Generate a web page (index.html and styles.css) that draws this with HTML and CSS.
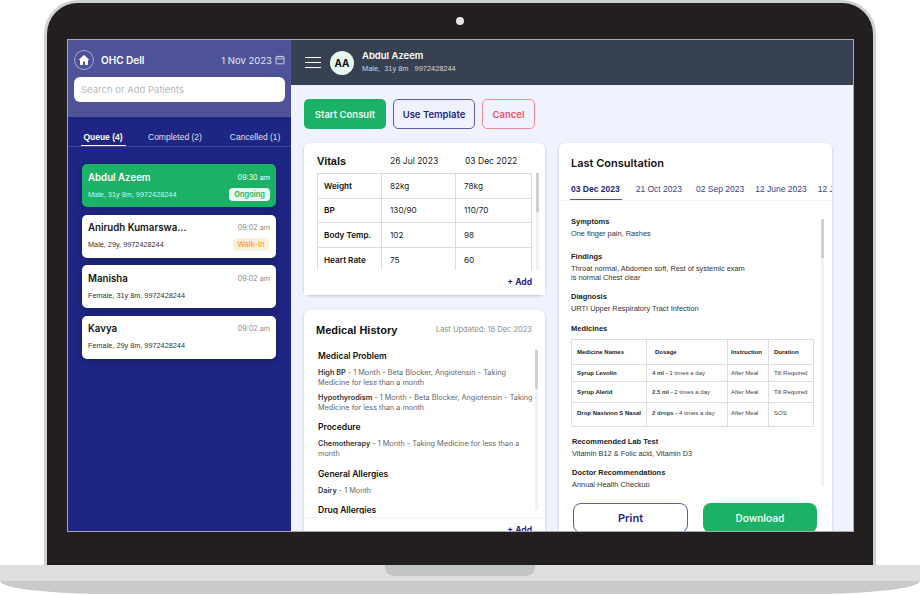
FILE: index.html
```html
<!DOCTYPE html>
<html lang="en">
<head>
    <meta charset="UTF-8">
    <title>OHC Dell - Queue</title>
    <link rel="stylesheet" href="styles.css">
</head>
<body>
<div class="laptop">
    <div class="lid">
        <div class="camera"></div>
        <div class="screen">
            <aside class="sidebar">
                <div class="side-head">
                    <div class="side-top">
                        <span class="home-icon">
                            <svg width="12" height="12" viewBox="0 0 24 24"><path fill="#fff" d="M12 2 1 12h3v10h6v-7h4v7h6V12h3z"/></svg>
                        </span>
                        <span class="clinic">OHC Dell</span>
                        <span class="today">1 Nov 2023</span>
                        <svg class="cal-icon" width="10" height="10" viewBox="0 0 10 10" fill="none" stroke="#fff" stroke-width="0.7"><rect x="0.9" y="1.6" width="8.2" height="7.2" rx="0.8"/><path d="M0.9 3.8h8.2M3 0.6v1.6M7 0.6v1.6"/></svg>
                    </div>
                    <div class="search">Search or Add Patients</div>
                </div>
                <div class="tabs">
                    <span class="tab tab-active">Queue (4)</span>
                    <span class="tab tab-completed">Completed (2)</span>
                    <span class="tab tab-cancelled">Cancelled (1)</span>
                </div>
                <div class="queue">
                    <div class="patient patient-active">
                        <div class="patient-row">
                            <span class="patient-name">Abdul Azeem</span>
                            <span class="patient-time">09:30 am</span>
                        </div>
                        <div class="patient-row">
                            <span class="patient-meta">Male, 31y 8m, 9972428244</span>
                            <span class="badge badge-ongoing">Ongoing</span>
                        </div>
                    </div>
                    <div class="patient">
                        <div class="patient-row">
                            <span class="patient-name">Anirudh Kumarswa...</span>
                            <span class="patient-time">09:02 am</span>
                        </div>
                        <div class="patient-row">
                            <span class="patient-meta">Male, 29y, 9972428244</span>
                            <span class="badge badge-walkin">Walk-In</span>
                        </div>
                    </div>
                    <div class="patient">
                        <div class="patient-row">
                            <span class="patient-name">Manisha</span>
                            <span class="patient-time">09:02 am</span>
                        </div>
                        <div class="patient-row">
                            <span class="patient-meta">Female, 31y 8m, 9972428244</span>
                        </div>
                    </div>
                    <div class="patient">
                        <div class="patient-row">
                            <span class="patient-name">Kavya</span>
                            <span class="patient-time">09:02 am</span>
                        </div>
                        <div class="patient-row">
                            <span class="patient-meta">Female, 29y 8m, 9972428244</span>
                        </div>
                    </div>
                </div>
            </aside>

            <div class="content">
                <header class="topbar">
                    <div class="burger"><span></span><span></span><span></span></div>
                    <div class="avatar">AA</div>
                    <div class="top-text">
                        <div class="top-name">Abdul Azeem</div>
                        <div class="top-meta">Male,&nbsp; 31y 8m &nbsp; 9972428244</div>
                    </div>
                </header>
                <main class="main">
                    <div class="actions">
                        <button class="btn btn-start">Start Consult</button>
                        <button class="btn btn-template">Use Template</button>
                        <button class="btn btn-cancel">Cancel</button>
                    </div>
                    <div class="columns">
                        <div class="left-col">
                            <section class="card vitals">
                                <div class="vitals-head">
                                    <h2 class="card-title">Vitals</h2>
                                    <span class="vitals-date vitals-date-a">26 Jul 2023</span>
                                    <span class="vitals-date">03 Dec 2022</span>
                                </div>
                                <div class="vitals-body">
                                    <table class="vitals-table">
                                        <tr><th>Weight</th><td>82kg</td><td>78kg</td></tr>
                                        <tr><th>BP</th><td>130/90</td><td>110/70</td></tr>
                                        <tr><th>Body Temp.</th><td>102</td><td>98</td></tr>
                                        <tr><th>Heart Rate</th><td>75</td><td>60</td></tr>
                                    </table>
                                    <div class="scrollbar"><div class="thumb"></div></div>
                                </div>
                                <div class="card-foot">+ Add</div>
                            </section>

                            <section class="card history">
                                <div class="history-head">
                                    <h2 class="card-title history-title">Medical History</h2>
                                    <span class="updated">Last Updated: 18 Dec 2023</span>
                                </div>
                                <div class="history-body">
                                    <div class="history-list">
                                        <h3>Medical Problem</h3>
                                        <p><b>High BP</b> - 1 Month - Beta Blocker, Angiotensin - Taking Medicine for less than a month</p>
                                        <p><b>Hypothyrodism</b> - 1 Month - Beta Blocker, Angiotensin - Taking Medicine for less than a month</p>
                                        <h3>Procedure</h3>
                                        <p><b>Chemotherapy</b> - 1 Month - Taking Medicine for less than a month</p>
                                        <h3>General Allergies</h3>
                                        <p><b>Dairy</b> - 1 Month</p>
                                        <h3>Drug Allergies</h3>
                                    </div>
                                    <div class="scrollbar"><div class="thumb"></div></div>
                                </div>
                                <div class="card-foot history-foot">+ Add</div>
                            </section>
                        </div>

                        <section class="card consult">
                            <h2 class="card-title consult-title">Last Consultation</h2>
                            <div class="date-tabs">
                                <span class="date-tab date-tab-active">03 Dec 2023</span>
                                <span class="date-tab">21 Oct 2023</span>
                                <span class="date-tab">02 Sep 2023</span>
                                <span class="date-tab date-tab-tight">12 June 2023</span>
                                <span class="date-tab">12 June 2023</span>
                            </div>
                            <div class="consult-body">
                                <div class="consult-notes">
                                    <div class="note note-wide">
                                        <h4>Symptoms</h4>
                                        <p>One finger pain, Rashes</p>
                                    </div>
                                    <div class="note note-findings">
                                        <h4>Findings</h4>
                                        <p>Throat normal, Abdomen soft, Rest of systemic exam<br>is normal Chest clear</p>
                                    </div>
                                    <div class="note note-diagnosis">
                                        <h4>Diagnosis</h4>
                                        <p>URTI Upper Respiratory Tract Infection</p>
                                    </div>
                                    <div class="note note-med">
                                        <h4>Medicines</h4>
                                    </div>
                                    <table class="med-table">
                                        <tr class="med-head"><th>Medicine Names</th><th class="med-dose-head">Dosage</th><th>Instruction</th><th>Duration</th></tr>
                                        <tr class="med-a"><th>Syrup Levolin</th><td><b>4 ml -</b> 3 times a day</td><td>After Meal</td><td>Till Required</td></tr>
                                        <tr class="med-b"><th>Syrup Alerid</th><td><b>2.5 ml -</b> 2 times a day</td><td>After Meal</td><td>Till Required</td></tr>
                                        <tr class="med-c"><th>Drop Nasivion S Nasal</th><td><b>2 drops -</b> 4 times a day</td><td>After Meal</td><td>SOS</td></tr>
                                    </table>
                                    <div class="note note-lab">
                                        <h4>Recommended Lab Test</h4>
                                        <p>Vitamin B12 &amp; Folic acid, Vitamin D3</p>
                                    </div>
                                    <div class="note note-doctor">
                                        <h4>Doctor Recommendations</h4>
                                        <p>Annual Health Checkup</p>
                                    </div>
                                </div>
                                <div class="scrollbar"><div class="thumb"></div></div>
                            </div>
                            <div class="consult-actions">
                                <button class="wide-btn wide-print">Print</button>
                                <button class="wide-btn wide-download">Download</button>
                            </div>
                        </section>
                    </div>
                </main>
            </div>
        </div>
    </div>
    <div class="base">
        <div class="base-top"><div class="notch"></div></div>
        <div class="base-bottom"></div>
    </div>
</div>
</body>
</html>
```

FILE: styles.css
```css
* {
    box-sizing: border-box;
}

body {
    margin: 0;
    background: #fff;
    font-family: Inter, "Liberation Sans", sans-serif;
    overflow: hidden;
}

h2, h3, h4, p {
    margin: 0;
}

.laptop {
    width: 920px;
    height: 595px;
}

.lid {
    width: 832px;
    height: 565px;
    margin-left: 44px;
    padding: 14px 19px 0 20px;
    background: #231f20;
    border: 3px solid #cfd0d0;
    border-bottom: none;
    border-radius: 34px 34px 0 0;
}

.camera {
    width: 8px;
    height: 8px;
    margin: 0 0 14px 389px;
    background: #e6e6e6;
    border-radius: 50%;
}

.screen {
    display: flex;
    height: 493px;
    border: 1px solid #a9aab0;
    overflow: hidden;
}

/* sidebar */
.sidebar {
    width: 223px;
    flex-shrink: 0;
    background: #1e2583;
}

.side-head {
    height: 77px;
    padding: 10px 6px 0 6px;
    background: #4d5299;
}

.side-top {
    display: flex;
    align-items: center;
    height: 20px;
    margin-bottom: 7px;
    color: #fff;
}

.home-icon {
    display: flex;
    align-items: center;
    justify-content: center;
    width: 20px;
    height: 20px;
    border: 1px solid #a7aad0;
    border-radius: 50%;
}

.clinic {
    margin-left: 7px;
    font-size: 10px;
    font-weight: 600;
}

.today {
    margin-left: auto;
    font-size: 9.5px;
    color: #e6e7f3;
}

.cal-icon {
    margin-left: 3px;
}

.search {
    height: 25px;
    padding: 0 7px;
    line-height: 25px;
    font-size: 9.5px;
    color: #b9b9b9;
    background: #fff;
    border-radius: 6px;
}

.tabs {
    display: flex;
    height: 30px;
    padding-top: 15px;
    border-bottom: 1px solid #3f4596;
    font-family: "Liberation Sans", sans-serif;
    font-size: 8.5px;
    color: #dfe0f0;
}

.tab {
    display: block;
    height: 14px;
}

.tab-active {
    width: 45px;
    margin-left: 13px;
    padding-right: 1px;
    font-weight: bold;
    color: #fff;
    text-align: center;
    border-bottom: 1px solid #fff;
}

.tab-completed {
    margin-left: 22px;
}

.tab-cancelled {
    margin-left: 28px;
}

.queue {
    display: flex;
    flex-direction: column;
    gap: 7.5px;
    padding: 17px 15px 0 14px;
}

.patient {
    display: flex;
    flex-direction: column;
    justify-content: space-between;
    height: 43px;
    padding: 6px;
    background: #fff;
    border-radius: 5px;
    box-shadow: 0 2px 6px rgba(0, 0, 0, 0.2);
}

.patient-active {
    background: #1bb167;
}

.patient-row {
    display: flex;
    align-items: center;
    justify-content: space-between;
    height: 14px;
}

.patient-name {
    font-size: 9.7px;
    font-weight: 600;
    color: #151515;
}

.patient-time {
    font-size: 7.2px;
    color: #8a8a8a;
}

.patient-meta {
    font-family: "Liberation Sans", sans-serif;
    font-size: 7.3px;
    color: #333;
}

.patient-active .patient-name,
.patient-active .patient-time {
    color: #fff;
}

.patient-active .patient-meta {
    color: #d6f3e4;
}

.badge {
    padding: 2px 5px;
    font-size: 7.5px;
    font-weight: 500;
    border-radius: 4px;
}

.badge-ongoing {
    color: #1bb167;
    background: #e8fbf1;
    font-weight: 600;
}

.badge-walkin {
    margin-right: 1px;
    padding: 2px 4.5px;
    color: #f5a02c;
    background: #fdf0dd;
}

/* right side */
.content {
    display: flex;
    flex-direction: column;
    flex: 1;
    min-width: 0;
}

.topbar {
    display: flex;
    align-items: center;
    flex-shrink: 0;
    height: 45px;
    padding-left: 14px;
    background: #374151;
    color: #fff;
}

.burger {
    display: flex;
    flex-direction: column;
    gap: 4px;
    width: 16px;
    margin-right: 9px;
}

.burger span {
    height: 1px;
    background: #fff;
}

.avatar {
    width: 24px;
    height: 24px;
    margin-right: 8px;
    line-height: 24px;
    text-align: center;
    font-size: 10px;
    font-weight: 700;
    color: #151515;
    background: #e8fbf1;
    border-radius: 50%;
}

.top-text {
    padding-bottom: 3px;
}

.top-name {
    font-size: 9.5px;
    font-weight: 600;
}

.top-meta {
    margin-top: 3px;
    font-family: "Liberation Sans", sans-serif;
    font-size: 7.4px;
    color: #d4d7dc;
}

.main {
    flex: 1;
    min-height: 0;
    padding: 14px 22px 0 13px;
    background: #f0f3ff;
    overflow: hidden;
}

.actions {
    display: flex;
    gap: 7px;
    margin-bottom: 14px;
}

.btn {
    height: 30px;
    padding: 0;
    font-family: Inter, sans-serif;
    font-size: 9.5px;
    font-weight: 600;
    border-radius: 5px;
    background: transparent;
    border: 1px solid transparent;
}

.btn-start {
    width: 82px;
    color: #e8fbf1;
    background: #1bb167;
}

.btn-template {
    width: 82px;
    color: #1e2583;
    border-color: #5a5fa8;
}

.btn-cancel {
    width: 53px;
    color: #f0525f;
    border-color: #f58c93;
}

.columns {
    display: flex;
    align-items: flex-start;
    gap: 14px;
}

.left-col {
    display: flex;
    flex-direction: column;
    gap: 15px;
    width: 241px;
    flex-shrink: 0;
}

.card {
    background: #fff;
    border-radius: 6px;
    box-shadow: 0 1px 3px rgba(0, 0, 0, 0.2);
}

.card-title {
    font-family: "Liberation Sans", sans-serif;
    font-size: 11px;
    font-weight: bold;
    color: #111;
}

.card-foot {
    height: 25px;
    padding-right: 13px;
    line-height: 25px;
    text-align: right;
    font-size: 8.5px;
    font-weight: 700;
    color: #1e2583;
    background: #fff;
}

.history-foot {
    border-top: 1px solid #f3f3f3;
}

.scrollbar {
    width: 3px;
    flex-shrink: 0;
    background: #f2f2f2;
}

.thumb {
    height: 39px;
    background: #cfcfcf;
}

/* vitals */
.vitals {
    height: 152px;
}

.vitals-head {
    display: flex;
    align-items: center;
    height: 30px;
    padding: 6px 0 1px 13px;
}

.vitals-head .card-title {
    width: 73px;
}

.vitals-date {
    font-size: 8.5px;
    color: #222;
}

.vitals-date-a {
    width: 75px;
}

.vitals-body {
    display: flex;
    gap: 4px;
    height: 97px;
    padding-left: 13px;
    overflow: hidden;
}

.vitals-table {
    width: 215px;
    height: 98px;
    flex-shrink: 0;
    border-collapse: collapse;
    table-layout: fixed;
    font-size: 8.2px;
    color: #222;
}

.vitals-table th,
.vitals-table td {
    height: 24.6px;
    padding: 0 6px;
    text-align: left;
    border: 1px solid #dcdcdc;
}

.vitals-table th {
    width: 64px;
    font-weight: 600;
    color: #111;
}

.vitals-table td:nth-child(2) {
    width: 74px;
}

.vitals-table td {
    padding-left: 8px;
}

/* history */
.history {
    height: 240px;
}

.history-head {
    display: flex;
    align-items: center;
    justify-content: space-between;
    height: 40px;
    padding: 0 13px 1px 12px;
}

.history-body {
    display: flex;
    height: 167px;
    padding-left: 14px;
    overflow: hidden;
}

.updated {
    font-size: 7.5px;
    color: #8a8a8a;
}

.history-list {
    width: 217px;
    height: 164px;
    flex-shrink: 0;
    overflow: hidden;
}

.history-list h3 {
    margin: 0 0 6px;
    font-size: 8.5px;
    line-height: 12px;
    font-weight: 600;
    color: #111;
}

.history-list p {
    margin-bottom: 4.5px;
    font-size: 7.3px;
    line-height: 10px;
    color: #666;
}

.history-list p + h3 {
    margin-top: 8.5px;
}

.history-list b {
    font-weight: 600;
    color: #333;
}

.history-body .scrollbar {
    height: 160px;
}

/* consultation */
.consult {
    width: 273px;
    height: 400px;
    flex-shrink: 0;
    overflow: hidden;
}

.consult-title {
    padding: 13px 0 0 12px;
    font-family: Inter, sans-serif;
    font-size: 11px;
    font-weight: 600;
    line-height: 14px;
}

.date-tabs {
    display: flex;
    gap: 14px;
    height: 31px;
    padding: 14px 0 0 12px;
    margin-bottom: 16px;
    border-bottom: 1px solid #f1f1f1;
    font-family: "Liberation Sans", sans-serif;
    font-size: 8.5px;
    white-space: nowrap;
    color: #3a4096;
}

.date-tab-active {
    height: 16px;
    margin-left: -1px;
    padding: 0 2px 0 1px;
    font-weight: bold;
    color: #1e2583;
    border-bottom: 1px solid #4d5299;
}

.date-tab:nth-child(3),
.date-tab-tight {
    margin-right: -3px;
}

.consult-body {
    display: flex;
    height: 270px;
    padding-left: 12px;
    overflow: hidden;
}

.consult-notes {
    width: 250px;
    flex-shrink: 0;
    font-family: "Liberation Sans", sans-serif;
}

.note {
    margin-bottom: 9px;
}

.note-wide {
    margin-bottom: 13px;
}

.note-findings {
    margin-bottom: 9.5px;
}

.note-diagnosis {
    margin-bottom: 10px;
}

.note-med {
    margin-bottom: 0;
}

.note h4 {
    font-size: 7.5px;
    line-height: 10px;
    font-weight: bold;
    color: #222;
}

.note p {
    margin-top: 2px;
    font-size: 7.4px;
    line-height: 9.5px;
    color: #333;
}

.med-table {
    width: 243px;
    margin-top: 5px;
    border-collapse: collapse;
    table-layout: fixed;
    font-size: 6px;
    color: #444;
}

.med-table th,
.med-table td {
    padding: 0 0 0 5px;
    text-align: left;
    white-space: nowrap;
    border: 1px solid #dedede;
}

.med-table th {
    color: #222;
}

.med-table tr > :nth-child(1) {
    width: 75px;
}

.med-table tr > :nth-child(2) {
    width: 81px;
}

.med-table tr > :nth-child(3) {
    width: 41px;
    padding-left: 3px;
}

.med-head > * {
    height: 25px;
}

.med-table .med-dose-head {
    padding-left: 8px;
}

.med-a > * {
    height: 17px;
}

.med-b > * {
    height: 21px;
}

.med-table .med-c > * {
    height: 24px;
    padding-bottom: 3px;
}

.note-lab {
    margin: 10px 0 10px 1px;
}

.note-doctor {
    margin-left: 1px;
}

.consult-body .scrollbar {
    margin-top: 2px;
}

.consult-actions {
    display: flex;
    gap: 15px;
    padding: 16px 0 0 14px;
}

.wide-btn {
    width: 115px;
    height: 30px;
    font-size: 11px;
    border-radius: 8px;
    border: 1px solid transparent;
}

.wide-print {
    font-family: Inter, sans-serif;
    font-weight: 600;
    color: #1e2583;
    background: #fff;
    border-color: #5a5fa8;
}

.wide-download {
    width: 114px;
    font-family: Roboto, sans-serif;
    font-weight: 500;
    color: #e8fbf1;
    background: #1bb167;
}

/* base of the laptop */
.base {
    height: 30px;
    overflow: hidden;
}

.base-top {
    height: 16px;
    background: #dedede;
}

.notch {
    width: 150px;
    height: 11px;
    margin-left: 385px;
    background: #c3c4c4;
    border-radius: 0 0 9px 9px;
}

.base-bottom {
    height: 13px;
    background: #c9caca;
    border-radius: 0 0 110px 110px / 0 0 13px 13px;
}
```
